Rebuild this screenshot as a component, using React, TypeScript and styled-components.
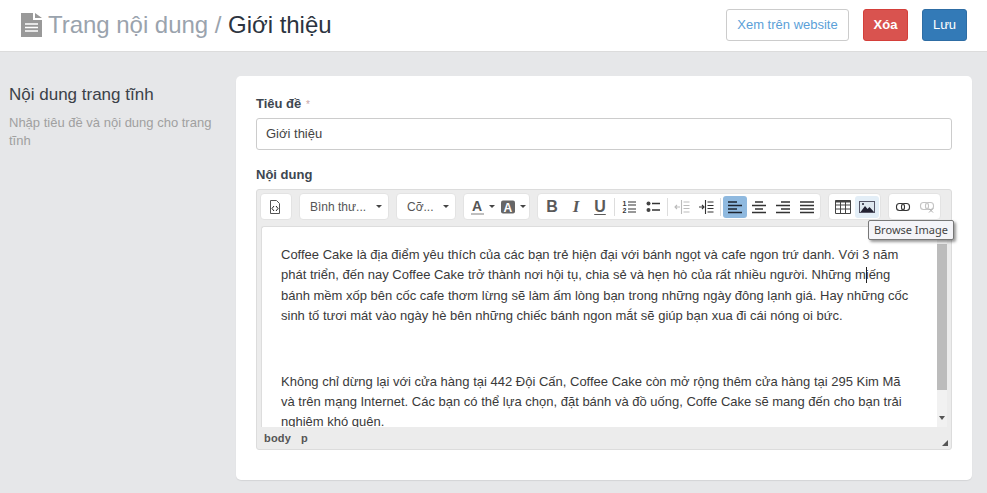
import React from "react";
import styled, { createGlobalStyle } from "styled-components";

const Global = createGlobalStyle`
  html, body { margin: 0; padding: 0; background: #e6e7e9; overflow: hidden; }
  * { box-sizing: border-box; }
  body { font-family: "Liberation Sans", Arial, sans-serif; font-size: 13px; color: #333; }
`;

const Page = styled.div`width: 987px; height: 493px; overflow: hidden; display: flex; flex-direction: column;`;
const Header = styled.header`
  height: 52px; flex: none; background: #fff; border-bottom: 1px solid #dcdcdc;
  display: flex; align-items: center; padding: 0 20px 2px 21px;
`;
const PageIcon = styled.svg`width: 21px; height: 24px; margin-right: 6px; flex: none; fill: #999;`;
const Title = styled.h1`margin: 0; font-size: 24px; font-weight: 400; color: #9aa3ad; flex: 1; line-height: 28px; letter-spacing: -0.03px;`;
const TitleCurrent = styled.span`color: #2c3440;`;
const HeaderActions = styled.div`display: flex; gap: 14px;`;
const ActionBtn = styled.button<{ $kind: "plain" | "danger" | "primary" }>`
  height: 32px; font: ${(p) => (p.$kind === "danger" ? "700" : "400")} 13px "Liberation Sans", sans-serif;
  border-radius: 3px; padding: 0; border: 1px solid;
  width: ${(p) => (p.$kind === "plain" ? "123px" : "45px")};
  background: ${(p) => (p.$kind === "plain" ? "#fff" : p.$kind === "danger" ? "#d9534f" : "#337ab7")};
  border-color: ${(p) => (p.$kind === "plain" ? "#ccc" : p.$kind === "danger" ? "#d43f3a" : "#2e6da4")};
  color: ${(p) => (p.$kind === "plain" ? "#5b9fd8" : "#fff")};
`;
const Body = styled.main`display: flex; padding: 24px 15px 0 9px; flex: 1;`;
const Side = styled.aside`width: 227px; flex: none; padding-top: 9px;`;
const SideTitle = styled.h2`margin: 0 0 9px; font-size: 17px; font-weight: 400; line-height: 20px; color: #3b4148;`;
const SideText = styled.p`margin: 0; width: 210px; color: #a0a0a0; font-size: 13px; line-height: 18px;`;
const Card = styled.section`
  width: 736px; height: 404px; background: #fff; border-radius: 5px; padding: 20px;
  box-shadow: 0 1px 1px rgba(0,0,0,.08); position: relative;
`;
const Label = styled.label<{ $gap: number; $h: number }>`
  display: block; font-size: 13px; font-weight: 700; color: #3d4650; line-height: 16px;
  height: ${(p) => p.$h}px; margin-bottom: ${(p) => p.$gap}px;
`;
const Req = styled.span`color: #c9a4a4; font-weight: 400; font-size: 10px; margin-left: 1px;`;
const Field = styled.div`
  height: 32px; border: 1px solid #ccc; border-radius: 3px; padding: 0 9px; line-height: 30px;
  font-size: 13px; color: #444; margin-bottom: 17px;
`;
const Editor = styled.div`
  height: 261px; width: 696px; background: #ececec; border: 1px solid #dcdcdc; border-radius: 3px;
  display: flex; flex-direction: column; position: relative;
`;
const Toolbar = styled.div`height: 36px; flex: none; display: flex; gap: 7px; padding: 3px 3px 0;`;
const Group = styled.div<{ $w: number }>`
  width: ${(p) => p.$w}px; height: 27px; background: #fff; border: 1px solid #e3e3e3; border-radius: 4px;
  display: flex; align-items: center; padding: 0 2px; color: #444;
`;
const Sel = styled(Group)`justify-content: space-between; padding: 0 6px 0 10px; font-size: 12px; color: #555;`;
const Caret = styled.i`width: 0; height: 0; border: 3px solid transparent; border-top: 3px solid #444; border-bottom: 0; flex: none;`;
const Tool = styled.span<{ $w?: number; $on?: boolean; $hover?: boolean }>`
  width: ${(p) => p.$w ?? 24}px; height: 22px; flex: none; border-radius: 3px; gap: 5px;
  display: flex; align-items: center; justify-content: center;
  background: ${(p) => (p.$on ? "#8fb9df" : p.$hover ? "#e3eef7" : "transparent")};
`;
const Sep = styled.i`width: 1px; height: 18px; background: #ddd; flex: none; margin: 0 2px;`;
const Ico = styled.svg`width: 16px; height: 16px; display: block; overflow: visible;`;
const SmallIco = styled(Ico)`width: 14px;`;
const Letter = styled.span<{ $i?: boolean; $u?: boolean }>`
  font: ${(p) => (p.$i ? "italic 700 17px" : "700 16px")} ${(p) => (p.$i ? '"Liberation Serif", serif' : '"Liberation Sans", sans-serif')};
  color: #5a5a5a; line-height: 18px;
  text-decoration: ${(p) => (p.$u ? "underline" : "none")};
  text-underline-offset: 2px;
`;
const Content = styled.div`
  height: 201px; flex: none; margin: 0 4px; background: #fff; border: 1px solid #ddd; border-bottom: 0; border-right: 0;
  position: relative; overflow: hidden; padding: 18px 30px 0 19px; color: #3a3a3a;
  font-size: 13px; line-height: 20.4px; border-radius: 3px 3px 0 0;
`;
const Para = styled.p`margin: 0 0 45px;`;
const Scroll = styled.div`position: absolute; top: 0; right: 0; bottom: 0; width: 10px; background: #f1f1f1; display: flex; flex-direction: column;`;
const Thumb = styled.div`height: 146px; margin-top: 17px; background: #bcbcbc;`;
const ScrollArrow = styled.i`position: absolute; left: 2px; bottom: 7px; width: 0; height: 0; border: 3.500px solid transparent; border-top: 4px solid #555; border-bottom: 0;`;
const Status = styled.div`flex: 1; padding: 0 7px; display: flex; gap: 10px; align-items: center; font-size: 11px; font-weight: 700; color: #555; letter-spacing: .2px; position: relative;`;
const Grip = styled.i`position: absolute; right: 3px; bottom: 3px; width: 0; height: 0; border-style: solid; border-width: 0 0 6px 6px; border-color: transparent transparent #555 transparent;`;
const Tip = styled.div`
  position: absolute; left: 611px; top: 30px; width: 86px; height: 20px; background: #f4f4f8; border: 1px solid #777;
  border-radius: 2px; font: 400 11px/18px "Noto Sans", sans-serif; color: #444; text-align: center;
  box-shadow: 2px 2px 3px rgba(0,0,0,.4); white-space: nowrap; z-index: 3;
`;
const Cursor = styled.i`position: absolute; left: 604px; top: 40px; width: 1px; height: 16px; background: #222;`;

const Lines = ({ d, stroke = "#333", w = 1.6 }: { d: string; stroke?: string; w?: number }) => (
  <Ico viewBox="0 0 16 16"><path d={d} fill="none" stroke={stroke} strokeWidth={w} /></Ico>
);

export default function App() {
  return (
    <Page>
      <Global />
      <Header>
        <PageIcon viewBox="0 0 21 24">
          <path d="M0 0h12v7h9v17H0z M14 0l7 5h-7z" />
          <path d="M4 11h13M4 14.5h13M4 18h13" stroke="#fff" strokeWidth="1.5" fill="none" />
        </PageIcon>
        <Title>Trang nội dung / <TitleCurrent>Giới thiệu</TitleCurrent></Title>
        <HeaderActions>
          <ActionBtn $kind="plain">Xem trên website</ActionBtn>
          <ActionBtn $kind="danger">Xóa</ActionBtn>
          <ActionBtn $kind="primary">Lưu</ActionBtn>
        </HeaderActions>
      </Header>
      <Body>
        <Side>
          <SideTitle>Nội dung trang tĩnh</SideTitle>
          <SideText>Nhập tiêu đề và nội dung cho trang tĩnh</SideText>
        </Side>
        <Card>
          <Label $h={15} $gap={7}>Tiêu đề <Req>*</Req></Label>
          <Field>Giới thiệu</Field>
          <Label $h={16} $gap={6}>Nội dung</Label>
          <Editor>
            <Toolbar>
              <Group $w={32}>
                <Tool>
                  <Ico viewBox="0 0 16 16">
                    <path d="M3.500 1.500h6l3 3v10h-9z" fill="none" stroke="#555" />
                    <path d="M7 7L5 9.500 7 12M9 7l2 2.500L9 12" fill="none" stroke="#222" />
                  </Ico>
                </Tool>
              </Group>
              <Sel $w={90}>Bình thư...<Caret /></Sel>
              <Sel $w={60}>Cỡ...<Caret /></Sel>
              <Group $w={67}>
                <Tool $w={32}>
                  <SmallIco viewBox="0 0 14 16">
                    <text x="2" y="12" fontFamily="Liberation Sans" fontWeight="700" fontSize="14" fill="#555">A</text>
                    <path d="M1 15h13" stroke="#aaa" strokeWidth="1.500" />
                  </SmallIco>
                  <Caret />
                </Tool>
                <Tool $w={30}>
                  <SmallIco viewBox="0 0 14 16">
                    <rect x="0" y="1.500" width="14" height="13" rx="2" fill="#666" />
                    <text x="2.500" y="12.500" fontFamily="Liberation Sans" fontWeight="700" fontSize="12" fill="#fff">A</text>
                  </SmallIco>
                  <Caret />
                </Tool>
              </Group>
              <Group $w={284}>
                <Tool><Letter>B</Letter></Tool>
                <Tool><Letter $i>I</Letter></Tool>
                <Tool><Letter $u>U</Letter></Tool>
                <Sep />
                <Tool>
                  <Ico viewBox="0 0 16 16">
                    <text x="1.500" y="7" fontFamily="Liberation Sans" fontWeight="700" fontSize="7" fill="#333">1</text>
                    <text x="1.500" y="14" fontFamily="Liberation Sans" fontWeight="700" fontSize="7" fill="#333">2</text>
                    <path d="M7 3h8M7 6h8M7 10h8M7 13h8" stroke="#333" strokeWidth="1.200" />
                  </Ico>
                </Tool>
                <Tool>
                  <Ico viewBox="0 0 16 16">
                    <circle cx="3.500" cy="4.500" r="2" fill="#444" /><circle cx="3.500" cy="11" r="2" fill="#444" />
                    <path d="M7 4.500h8M7 11h8" stroke="#333" strokeWidth="1.500" />
                  </Ico>
                </Tool>
                <Sep />
                <Tool><Lines stroke="#bbb" w={1.1} d="M1 8h5M3 6L1 8l2 2M7.500 1v14M9.500 3h6M9.500 6.500h6M9.500 9.500h6M9.500 13h6" /></Tool>
                <Tool><Lines w={1.1} d="M1 8h5M4 6l2 2-2 2M7.500 1v14M9.500 3h6M9.500 6.500h6M9.500 9.500h6M9.500 13h6" /></Tool>
                <Sep />
                <Tool $on><Lines stroke="#1d2530" w={1.7} d="M1 3h9M1 6.500h14M1 10h9M1 13.500h14" /></Tool>
                <Tool><Lines w={1.7} d="M4 3h8M1 6.500h14M4 10h8M1 13.500h14" /></Tool>
                <Tool><Lines w={1.7} d="M6 3h9M1 6.500h14M6 10h9M1 13.500h14" /></Tool>
                <Tool><Lines w={1.7} d="M1 3h14M1 6.500h14M1 10h14M1 13.500h14" /></Tool>
              </Group>
              <Group $w={53}>
                <Tool>
                  <Ico viewBox="0 0 16 16">
                    <path d="M.5 1.500h15v13H.5zM.5 6h15M.5 10h15M5.500 3v11M10.500 3v11" fill="none" stroke="#444" />
                    <path d="M.5 2.500h15" stroke="#444" strokeWidth="2" />
                  </Ico>
                </Tool>
                <Tool $hover>
                  <Ico viewBox="0 0 16 16">
                    <rect x=".5" y="2.500" width="15" height="11" fill="#dfe8f0" stroke="#556" />
                    <path d="M1.500 13l4.500-6 2.500 3 2-2 4.500 5z" fill="#223" />
                    <circle cx="4" cy="5" r="1" fill="#223" />
                  </Ico>
                </Tool>
              </Group>
              <Group $w={53}>
                <Tool>
                  <Ico viewBox="0 0 16 16">
                    <rect x="1.500" y="4.500" width="8" height="7" rx="3" fill="none" stroke="#333" strokeWidth="1.100" />
                    <rect x="6.500" y="4.500" width="8" height="7" rx="3" fill="none" stroke="#333" strokeWidth="1.100" />
                  </Ico>
                </Tool>
                <Tool>
                  <Ico viewBox="0 0 16 16">
                    <rect x="1.500" y="3.500" width="8" height="7" rx="3" fill="none" stroke="#c4c4c4" strokeWidth="1.100" />
                    <rect x="6.500" y="3.500" width="8" height="7" rx="3" fill="none" stroke="#c4c4c4" strokeWidth="1.100" />
                    <path d="M10 9.500l4 4M14 9.500l-4 4" stroke="#aaa" />
                  </Ico>
                </Tool>
              </Group>
            </Toolbar>
            <Tip>Browse Image</Tip>
            <Content>
              <Para>Coffee Cake là địa điểm yêu thích của các bạn trẻ hiện đại với bánh ngọt và cafe ngon trứ danh. Với 3 năm phát triển, đến nay Coffee Cake trở thành nơi hội tụ, chia sẻ và hẹn hò của rất nhiều người. Những miếng bánh mềm xốp bên cốc cafe thơm lừng sẽ làm ấm lòng bạn trong những ngày đông lạnh giá. Hay những cốc sinh tố tươi mát vào ngày hè bên những chiếc bánh ngon mắt sẽ giúp bạn xua đi cái nóng oi bức.</Para>
              <Para>Không chỉ dừng lại với cửa hàng tại 442 Đội Cấn, Coffee Cake còn mở rộng thêm cửa hàng tại 295 Kim Mã và trên mạng Internet. Các bạn có thể lựa chọn, đặt bánh và đồ uống, Coffe Cake sẽ mang đến cho bạn trải nghiệm khó quên.</Para>
              <Cursor />
              <Scroll><Thumb /><ScrollArrow /></Scroll>
            </Content>
            <Status><span>body</span><span>p</span><Grip /></Status>
          </Editor>
        </Card>
      </Body>
    </Page>
  );
}
